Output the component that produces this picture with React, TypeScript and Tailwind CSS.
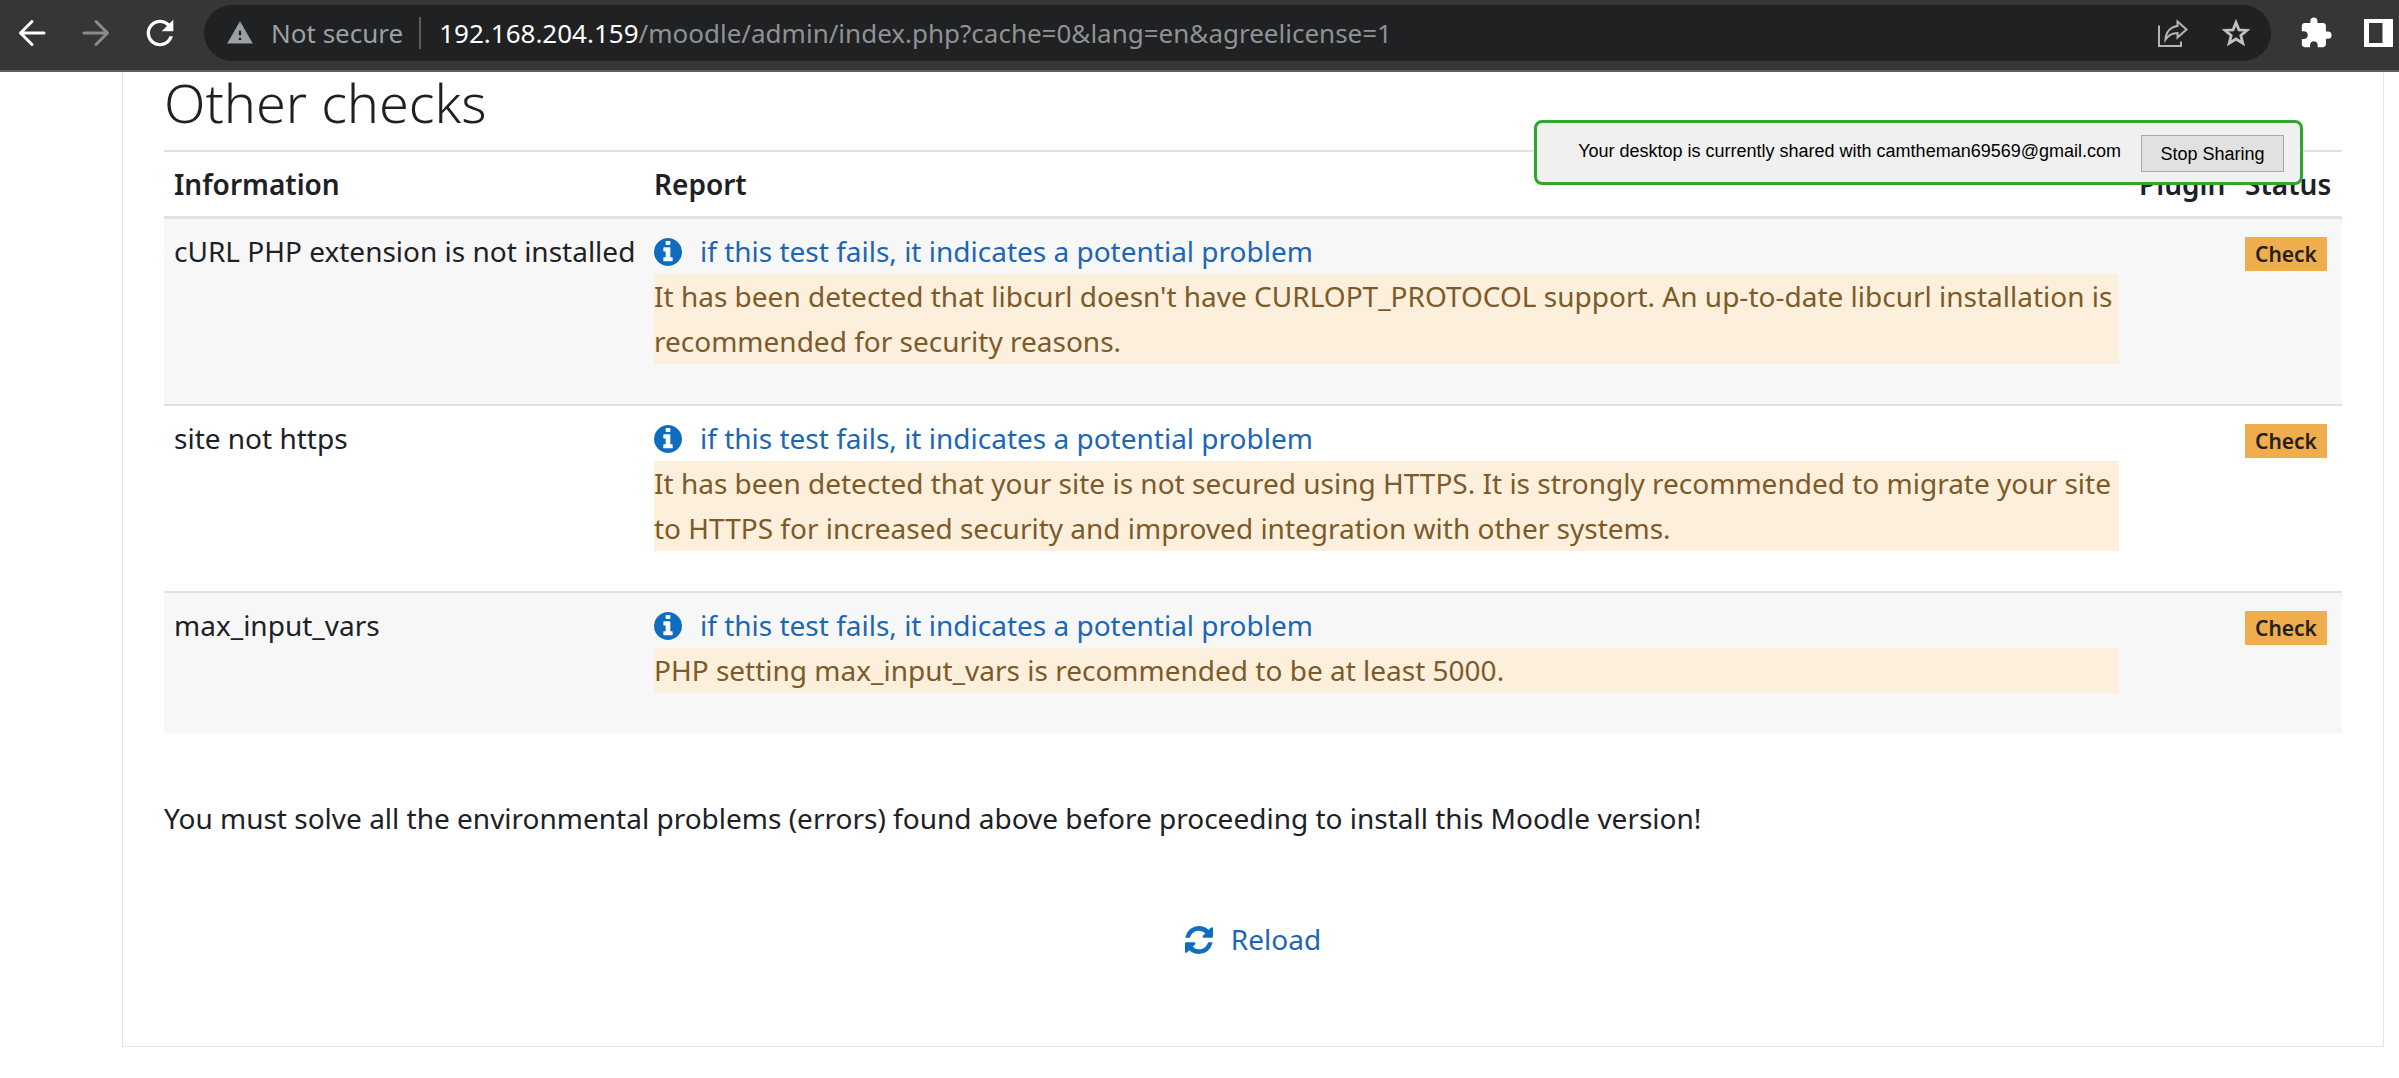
import React from "react";
import { MdExtension, MdRefresh, MdWarning } from "react-icons/md";

type Check = { name: string; message: string };

const checks: Check[] = [
  {
    name: "cURL PHP extension is not installed",
    message:
      "It has been detected that libcurl doesn't have CURLOPT_PROTOCOL support. An up-to-date libcurl installation is recommended for security reasons.",
  },
  {
    name: "site not https",
    message:
      "It has been detected that your site is not secured using HTTPS. It is strongly recommended to migrate your site to HTTPS for increased security and improved integration with other systems.",
  },
  {
    name: "max_input_vars",
    message: "PHP setting max_input_vars is recommended to be at least 5000.",
  },
];

function ArrowIcon({ className }: { className: string }) {
  return (
    <svg
      viewBox="0 0 28 28"
      className={className}
      fill="none"
      stroke="currentColor"
      strokeWidth="3"
      strokeLinecap="round"
      strokeLinejoin="round"
      aria-hidden="true"
    >
      <path d="M26 14H2.500M14 2.500L2.500 14L14 25.500" />
    </svg>
  );
}

function ShareIcon() {
  return (
    <svg
      viewBox="0 0 30 28"
      className="h-7 w-[30px]"
      fill="none"
      stroke="currentColor"
      strokeWidth="2"
      aria-hidden="true"
    >
      <path d="M1 6.500V27H23V22.500" />
      <path d="M19.500 2.500L28.500 10.500L19.500 18.500V14C14 14 10.500 16 7.500 20.500C8 13.500 12 8 19.500 7Z" />
    </svg>
  );
}

function StarIcon() {
  return (
    <svg
      viewBox="0 0 30 30"
      className="size-[30px]"
      fill="none"
      stroke="currentColor"
      strokeWidth="2.800"
      aria-hidden="true"
    >
      <path d="M15 4.500L17.900 11.800L25.900 12.400L19.800 17.500L21.800 25.200L15 21L8.200 25.200L10.200 17.500L4.100 12.400L12.100 11.800Z" />
    </svg>
  );
}

function SidePanelIcon() {
  return (
    <svg viewBox="0 0 29 28" className="h-7 w-[29px]" fill="currentColor" aria-hidden="true">
      <path fillRule="evenodd" d="M0 0H29V28H0ZM5 4V24H18.500V4Z" />
    </svg>
  );
}

function InfoIcon() {
  return (
    <svg viewBox="0 0 1536 1536" className="size-7" fill="currentColor" aria-hidden="true">
      <path d="M1024 1248v-160q0-14-9-23t-23-9h-96v-512q0-14-9-23t-23-9h-320q-14 0-23 9t-9 23v160q0 14 9 23t23 9h96v320h-96q-14 0-23 9t-9 23v160q0 14 9 23t23 9h448q14 0 23-9t9-23zm-128-896v-160q0-14-9-23t-23-9h-192q-14 0-23 9t-9 23v160q0 14 9 23t23 9h192q14 0 23-9t9-23zm640 416q0 209-103 385.500t-279.500 279.500-385.500 103-385.500-103-279.500-279.500-103-385.500 103-385.500 279.500-279.500 385.500-103 385.500 103 279.500 279.500 103 385.500z" />
    </svg>
  );
}

function ReloadIcon() {
  return (
    <svg viewBox="0 0 1536 1536" className="size-7" fill="currentColor" aria-hidden="true">
      <path d="M1511 928q0 5-1 7-64 268-268 434.500t-478 166.500q-146 0-282.500-55t-243.500-157l-129 129q-19 19-45 19t-45-19-19-45v-448q0-26 19-45t45-19h448q26 0 45 19t19 45-19 45l-137 137q71 66 161 102t187 36q134 0 250-65t186-179q11-17 53-117 8-23 30-23h192q13 0 22.500 9.500t9.500 22.500zm25-800v448q0 26-19 45t-45 19h-448q-26 0-45-19t-19-45 19-45l138-138q-148-137-349-137-134 0-250 65t-186 179q-11 17-53 117-8 23-30 23h-199q-13 0-22.500-9.500t-9.500-22.500v-7q65-268 270-434.500t480-166.500q146 0 284 55.500t245 156.500l130-129q19-19 45-19t45 19 19 45z" />
    </svg>
  );
}

function BrowserBar() {
  return (
    <header className="flex h-[72px] items-center border-b-2 border-[#625d5d] bg-[#363636] pb-1 pl-[18px] pr-1.5 text-white">
      <button type="button" aria-label="Back">
        <ArrowIcon className="size-7" />
      </button>
      <button type="button" aria-label="Forward" className="ml-9 text-[#8b8b8b]">
        <ArrowIcon className="size-7 rotate-180" />
      </button>
      <button type="button" aria-label="Reload page" className="ml-[30px]">
        <MdRefresh className="size-10" />
      </button>
      <div className="ml-6 mr-7 flex h-14 flex-1 items-center whitespace-nowrap rounded-full bg-[#202122] pl-[22px] pr-5 text-[26px] text-[#9aa0a3]">
        <button type="button" className="flex items-center gap-[17px]">
          <MdWarning className="size-7" />
          Not secure
        </button>
        <span className="ml-4 h-8 w-0.5 bg-[#5a5d5f]" />
        <span className="ml-[18px] flex-1 text-[#8f9294]">
          <span className="text-white">192.168.204.159</span>
          /moodle/admin/index.php?cache=0&amp;lang=en&amp;agreelicense=1
        </span>
        <button type="button" aria-label="Share this page" className="text-[#b4b5b6]">
          <ShareIcon />
        </button>
        <button type="button" aria-label="Bookmark this page" className="ml-[33px] text-[#c0c1c1]">
          <StarIcon />
        </button>
      </div>
      <button type="button" aria-label="Extensions">
        <MdExtension className="size-[34px]" />
      </button>
      <button type="button" aria-label="Side panel" className="ml-[31px]">
        <SidePanelIcon />
      </button>
    </header>
  );
}

function SharingNotice() {
  return (
    <div
      role="status"
      className="absolute right-24 top-[120px] flex items-start gap-5 rounded-lg border-3 border-[#33a52c] bg-[#f0f0f0] pb-2.5 pl-[41px] pr-4 pt-3 font-['Liberation_Sans',sans-serif] text-[18px] text-black"
    >
      <p className="leading-8">Your desktop is currently shared with camtheman69569@gmail.com</p>
      <button type="button" className="h-[37px] w-[143px] border border-[#a8a8a8] bg-[#e1e1e1] leading-9">
        Stop Sharing
      </button>
    </div>
  );
}

function CheckRow({ check }: { check: Check }) {
  return (
    <tr className="align-top odd:bg-[#f7f7f7] [&>td]:px-2.5 [&>td]:py-2.5 not-first:[&>td]:border-t-2 not-first:[&>td]:border-[#dfe1e2]">
      <td className="whitespace-nowrap">{check.name}</td>
      <td>
        <a href="#details" className="flex w-fit items-center gap-[18px] text-[#1d66b4]">
          <span className="text-[#0f6cbf]">
            <InfoIcon />
          </span>
          if this test fails, it indicates a potential problem
        </a>
        <p className="mb-[30px] bg-[#fcefdc] text-[#7d5a29]">{check.message}</p>
      </td>
      <td />
      <td>
        <span className="mt-2 block w-fit bg-[#f0ad4e] px-2.5 text-[21px] font-semibold leading-[34px] text-[#26201a]">
          Check
        </span>
      </td>
    </tr>
  );
}

export default function App() {
  return (
    <div className="relative min-h-screen bg-white font-['Noto_Sans',sans-serif] text-[28px] leading-[45px] text-[#1d2125]">
      <BrowserBar />
      <main className="ml-[122px] mr-[15px] border border-t-0 border-[#e3e5e7] px-[41px] pb-[84px]">
        <h2 className="text-[54px] font-light leading-[60px]">Other checks</h2>
        <table className="mt-[18px] w-full table-fixed border-separate border-spacing-0">
          <colgroup>
            <col className="w-[480px]" />
            <col />
            <col className="w-[106px]" />
            <col className="w-[107px]" />
          </colgroup>
          <thead>
            <tr className="text-left [&>th]:h-[69px] [&>th]:border-b-3 [&>th]:border-t-2 [&>th]:border-b-[#dde5e3] [&>th]:border-t-[#dfe1e2] [&>th]:px-2.5 [&>th]:font-semibold">
              <th scope="col">Information</th>
              <th scope="col">Report</th>
              <th scope="col">Plugin</th>
              <th scope="col">Status</th>
            </tr>
          </thead>
          <tbody>
            {checks.map((check) => (
              <CheckRow key={check.name} check={check} />
            ))}
          </tbody>
        </table>
        <p className="mt-[63px]">
          You must solve all the environmental problems (errors) found above before proceeding to install this Moodle
          version!
        </p>
        <p className="mt-[76px] flex justify-center">
          <a href="#reload" className="flex items-center gap-[18px] text-[#1d66b4]">
            <span className="text-[#0f6cbf]">
              <ReloadIcon />
            </span>
            Reload
          </a>
        </p>
      </main>
      <SharingNotice />
    </div>
  );
}
